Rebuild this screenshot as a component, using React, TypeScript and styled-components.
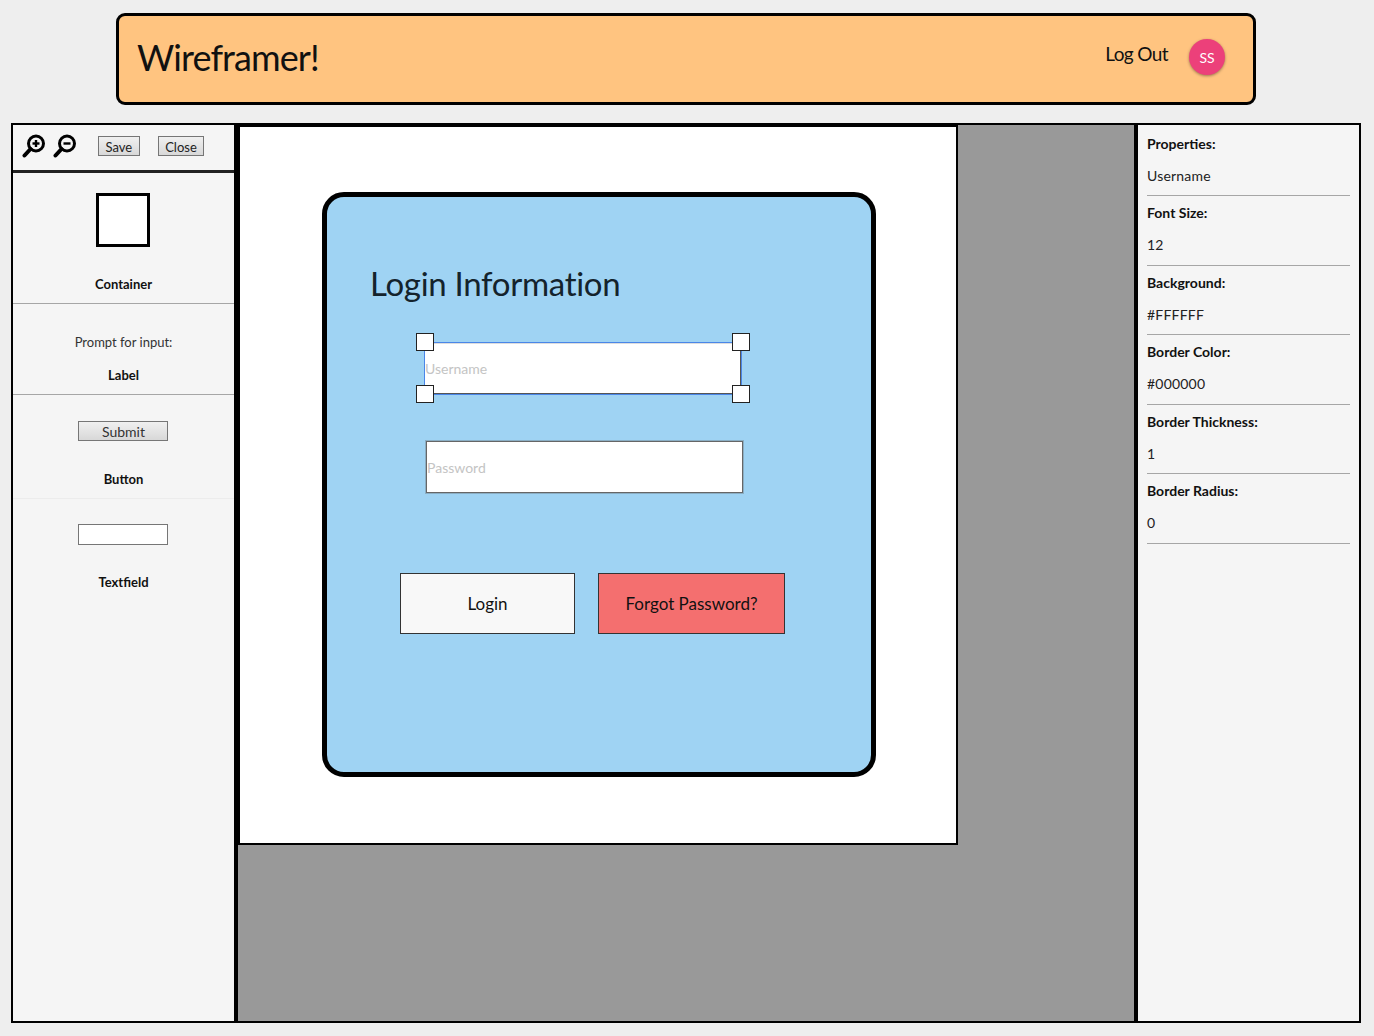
import styled, { createGlobalStyle } from "styled-components";

const GlobalStyle = createGlobalStyle`
  html, body {
    margin: 0;
    padding: 0;
    background: #eeeeee;
  }
  * {
    box-sizing: border-box;
  }
  body {
    font-family: "Lato", "Liberation Sans", sans-serif;
    color: #111;
  }
`;

const Page = styled.div`
  width: 1374px;
  height: 1036px;
  padding: 13px 13px 13px 11px;
  display: flex;
  flex-direction: column;
  align-items: center;
`;

const Banner = styled.header`
  width: 1140px;
  height: 92px;
  flex: none;
  display: flex;
  align-items: center;
  padding: 0 28px 0 18px;
  background: #ffc480;
  border: 3px solid #000;
  border-radius: 9px;
`;

const Brand = styled.div`
  flex: 1;
  font-size: 36px;
  letter-spacing: -0.9px;
  margin-top: -4px;
  color: #111;
`;

const LogOut = styled.div`
  font-size: 19px;
  letter-spacing: -0.6px;
  margin-right: 21px;
  margin-top: -12px;
`;

const Avatar = styled.div`
  width: 36px;
  height: 36px;
  margin-top: -4px;
  border-radius: 50%;
  background: #ec407a;
  color: #fff;
  font-size: 14px;
  display: flex;
  align-items: center;
  justify-content: center;
  box-shadow: 0 1px 3px rgba(0, 0, 0, 0.4);
`;

const Workspace = styled.main`
  width: 1350px;
  height: 900px;
  margin-top: 18px;
  flex: none;
  display: flex;
  border: 2px solid #000;
  background: #f5f5f5;
`;

const LeftPanel = styled.aside`
  width: 221px;
  flex: none;
  display: flex;
  flex-direction: column;
`;

const Toolbar = styled.div`
  height: 48px;
  display: flex;
  align-items: center;
  padding: 0 0 4px 9px;
  border-bottom: 3px solid #222;
`;

const ZoomIcon = styled.svg`
  width: 24px;
  height: 24px;
  margin-right: 7px;
`;

const SmallButton = styled.button<{ $left: number }>`
  height: 20px;
  margin-left: ${(p) => p.$left}px;
  padding: 1px 6.5px 0;
  font-family: inherit;
  font-size: 13px;
  line-height: 18px;
  color: #222;
  border: 1px solid #767676;
  background: linear-gradient(#f0f0f0, #d8d8d8);
`;

const Section = styled.section<{ $height: number; $line: string }>`
  height: ${(p) => p.$height}px;
  flex: none;
  display: flex;
  flex-direction: column;
  align-items: center;
  border-bottom: 1px solid ${(p) => p.$line};
`;

const ContainerSwatch = styled.div`
  width: 54px;
  height: 54px;
  margin: 20px 2px 0 0;
  background: #fff;
  border: 3px solid #000;
`;

const PromptText = styled.div`
  margin-top: 30px;
  font-size: 13px;
  line-height: 17px;
  color: #333;
`;

const SubmitSample = styled.button`
  width: 90px;
  height: 20px;
  margin: 26px 2px 0 0;
  padding: 0 0 0 2px;
  font-family: inherit;
  font-size: 14px;
  line-height: 17px;
  color: #333;
  border: 1px solid #767676;
  background: linear-gradient(#f0f0f0, #d8d8d8);
`;

const FieldSample = styled.div`
  width: 90px;
  height: 21px;
  margin: 25px 2px 0 0;
  background: #fff;
  border: 1px solid #767676;
`;

const ItemName = styled.div<{ $top: number }>`
  margin-top: ${(p) => p.$top}px;
  font-size: 13px;
  line-height: 17px;
  font-weight: 700;
  color: #111;
`;

const Divider = styled.div`
  width: 4px;
  flex: none;
  background: #000;
`;

const CanvasArea = styled.div`
  width: 896px;
  flex: none;
  background: #999999;
  position: relative;
`;

const Artboard = styled.div`
  width: 720px;
  height: 720px;
  background: #fff;
  border: 2px solid #000;
  position: relative;
`;

const LoginCard = styled.div`
  position: absolute;
  left: 82px;
  top: 65px;
  width: 554px;
  height: 585px;
  background: #9fd3f3;
  border: 5px solid #000;
  border-radius: 22px;
`;

const CardTitle = styled.div`
  position: absolute;
  left: 43px;
  top: 66px;
  font-size: 33px;
  letter-spacing: -0.3px;
  line-height: 41px;
  color: #14232c;
`;

const FieldBox = styled.div<{ $top: number }>`
  position: absolute;
  left: 99px;
  top: ${(p) => p.$top}px;
  width: 317px;
  height: 52px;
  background: #fff;
  border: 1px solid #666;
  outline: 1px solid rgba(90, 90, 90, 0.3);
  display: flex;
  align-items: center;
  font-size: 14px;
  color: #c4c4c4;
`;

const SelectedFieldBox = styled(FieldBox)`
  left: 97px;
  width: 318px;
  height: 53px;
  border-color: #4a86e8;
  outline: none;
  box-shadow: inset -1px -1px 0 #555, inset 0 1px 0 #ddd;
`;

const Handle = styled.span<{ $x: "left" | "right"; $y: "top" | "bottom" }>`
  position: absolute;
  ${(p) => p.$x}: -9px;
  ${(p) => (p.$y === "top" ? "top: -10px;" : "bottom: -9px;")}
  width: 18px;
  height: 18px;
  background: #fff;
  border: 1px solid #222;
`;

const CardButton = styled.div<{ $left: number; $width: number; $bg: string }>`
  position: absolute;
  left: ${(p) => p.$left}px;
  top: 376px;
  width: ${(p) => p.$width}px;
  height: 61px;
  background: ${(p) => p.$bg};
  border: 1px solid #333;
  display: flex;
  align-items: center;
  justify-content: center;
  font-size: 17px;
  color: #111;
`;

const RightPanel = styled.aside`
  flex: 1;
  padding: 1.4px 9px 0;
`;

const PropertyRow = styled.div`
  height: 69.6px;
  border-bottom: 1px solid #a6a6a6;
  padding-top: 8px;
  &:first-child {
    padding-top: 9px;
  }
`;

const PropertyName = styled.div`
  font-size: 14px;
  line-height: 17px;
  font-weight: 700;
  color: #111;
`;

const PropertyValue = styled.div`
  margin-top: 15px;
  font-size: 14px;
  letter-spacing: 0.2px;
  line-height: 17px;
  color: #222;
`;

const properties = [
  ["Properties:", "Username"],
  ["Font Size:", "12"],
  ["Background:", "#FFFFFF"],
  ["Border Color:", "#000000"],
  ["Border Thickness:", "1"],
  ["Border Radius:", "0"],
];

function MagnifierIcon({ plus }: { plus?: boolean }) {
  return (
    <ZoomIcon viewBox="0 0 24 24">
      <circle cx="14" cy="9.5" r="7.5" fill="none" stroke="#000" strokeWidth="3" />
      <path d="M8.5 15 L2.5 21.5" stroke="#000" strokeWidth="4" strokeLinecap="round" />
      <path d="M10.5 9.5 H17.5" stroke="#000" strokeWidth="2.4" />
      {plus && <path d="M14 6 V13" stroke="#000" strokeWidth="2.4" />}
    </ZoomIcon>
  );
}

export default function App() {
  return (
    <>
      <GlobalStyle />
      <Page>
        <Banner>
          <Brand>Wireframer!</Brand>
          <LogOut>Log Out</LogOut>
          <Avatar>SS</Avatar>
        </Banner>
        <Workspace>
          <LeftPanel>
            <Toolbar>
              <MagnifierIcon plus />
              <MagnifierIcon />
              <SmallButton $left={14}>Save</SmallButton>
              <SmallButton $left={18}>Close</SmallButton>
            </Toolbar>
            <Section $height={131} $line="#a6a6a6">
              <ContainerSwatch />
              <ItemName $top={29}>Container</ItemName>
            </Section>
            <Section $height={91} $line="#a6a6a6">
              <PromptText>Prompt for input:</PromptText>
              <ItemName $top={16}>Label</ItemName>
            </Section>
            <Section $height={104} $line="#ececec">
              <SubmitSample>Submit</SubmitSample>
              <ItemName $top={30}>Button</ItemName>
            </Section>
            <Section $height={100} $line="transparent">
              <FieldSample />
              <ItemName $top={29}>Textfield</ItemName>
            </Section>
          </LeftPanel>
          <Divider />
          <CanvasArea>
            <Artboard>
              <LoginCard>
                <CardTitle>Login Information</CardTitle>
                <SelectedFieldBox $top={145}>
                  Username
                  <Handle $x="left" $y="top" />
                  <Handle $x="right" $y="top" />
                  <Handle $x="left" $y="bottom" />
                  <Handle $x="right" $y="bottom" />
                </SelectedFieldBox>
                <FieldBox $top={244}>Password</FieldBox>
                <CardButton $left={73} $width={175} $bg="#f8f8f8">Login</CardButton>
                <CardButton $left={271} $width={187} $bg="#f46f6f">Forgot Password?</CardButton>
              </LoginCard>
            </Artboard>
          </CanvasArea>
          <Divider />
          <RightPanel>
            {properties.map(([name, value]) => (
              <PropertyRow key={name}>
                <PropertyName>{name}</PropertyName>
                <PropertyValue>{value}</PropertyValue>
              </PropertyRow>
            ))}
          </RightPanel>
        </Workspace>
      </Page>
    </>
  );
}
